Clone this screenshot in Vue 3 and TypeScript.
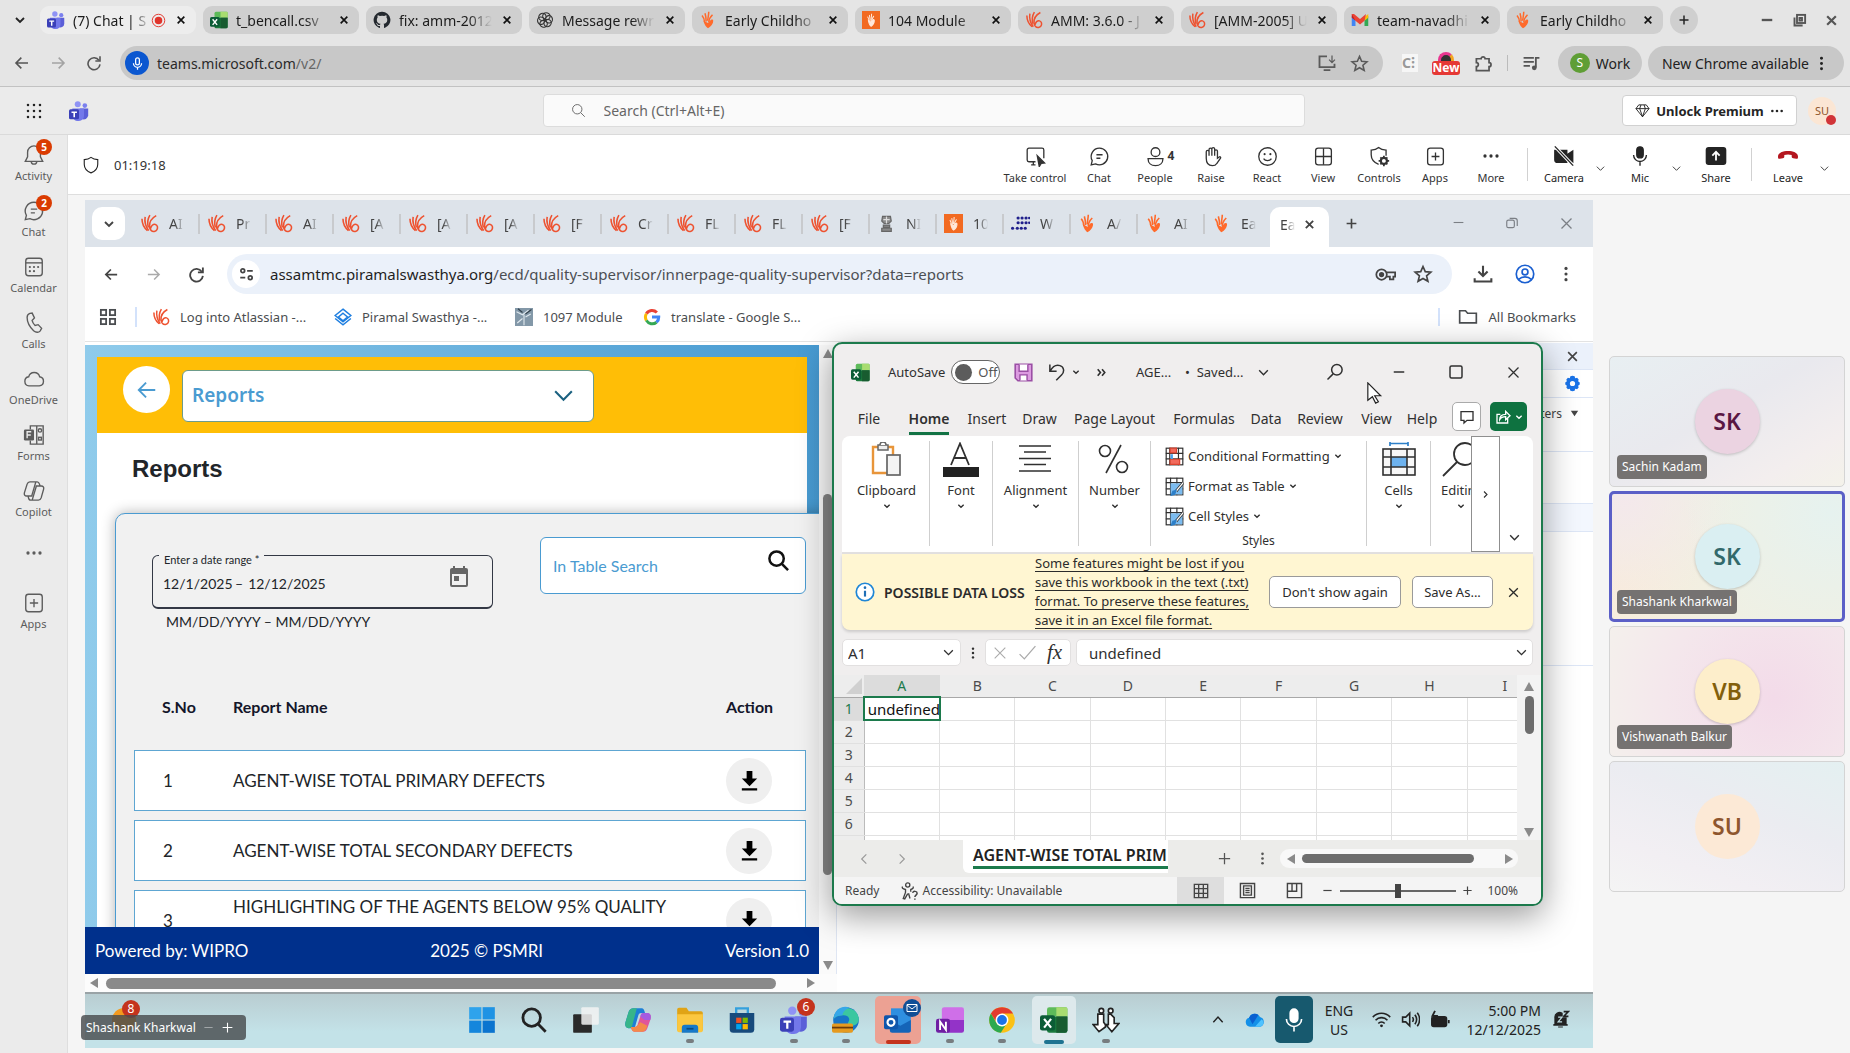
<script setup lang="ts">
import { h, ref } from 'vue'

const hand = '<g stroke="#ee5230" stroke-width="2" fill="none"><path d="M2.500 6c0 6 2 11 7 15"/><path d="M6.500 3.500c-1 6 .5 12 4.500 17.500"/><path d="M12.500 1.500c-3 5-3.500 10-2 15.500"/><path d="M20.500 2c-5.500 3-9 8-8.500 14 .3 4 3 6.500 6 6 3.200-.5 4.600-3.400 4-6-.8-3-4-4-6.500-1.800-1.300 1.200-1.800 2.600-2.200 4.300"/></g>'
const hand2 = '<g stroke="#ff6a2b" stroke-width="2" fill="none"><path d="M4 6c2 2 3 5 3.500 9"/><path d="M8 3c1 3 1.500 7 1.500 11"/><path d="M13 1c0 4-1 8-1.500 12"/><path d="M18 5c-3 3-5 6-5 10"/></g><path d="M6 13c1 5 4 9 6 10 4-2 7-6 7-10 0-2-3-2-4-.5L12 16z" fill="#ff6a2b" stroke="none"/>'
const teamsSvg = '<g stroke="none"><circle cx="10.500" cy="4" r="3.600" fill="#8f93f5"/><circle cx="19" cy="5.500" r="2.800" fill="#7b80ee"/><path d="M13 9h10v8a5 5 0 0 1-8 4z" fill="#5b5fd8"/><path d="M4 9h14v9a6 6 0 0 1-6 6 7 7 0 0 1-8-6z" fill="#7378ea"/><rect x="0" y="10" width="12" height="12" rx="2" fill="#3b40b8"/><path d="M3 12.500h6.500v1.800H7.200V19.500H5.300v-5.200H3z" fill="#fff"/></g>'
const excelSvg = '<g stroke="none"><path d="M8 1h14a1.500 1.500 0 0 1 1.500 1.500V9H6V3a2 2 0 0 1 2-2z" fill="#5dbb5a"/><path d="M14 1h8a1.500 1.500 0 0 1 1.500 1.500V9H14z" fill="#a8dc70"/><path d="M6 9h17.500v12a2 2 0 0 1-2 2H8a2 2 0 0 1-2-2z" fill="#1b7a3c"/><path d="M14 9h9.500v12a2 2 0 0 1-2 2H14z" fill="#185c30"/><rect x="0" y="8" width="13" height="13" rx="2" fill="#0b5c36"/><path d="M3.500 11l6 7.500M9.500 11l-6 7.500" stroke="#fff" stroke-width="1.900"/></g>'
const icons: Record<string, string> = {
  hand, hand2, teams: teamsSvg, excel: excelSvg,
  handBox: '<rect width="24" height="24" fill="#f26a21" stroke="none"/><g transform="translate(5 3) scale(.6 .75)" stroke="#ffe9dc" stroke-width="2.200"><path d="M4 6c2 2 3 5 3.500 9"/><path d="M8 3c1 3 1.500 7 1.500 11"/><path d="M13 1c0 4-1 8-1.500 12"/><path d="M18 5c-3 3-5 6-5 10"/><path d="M6 13c1 5 4 9 6 10 4-2 7-6 7-10 0-2-3-2-4-.5L12 16z" fill="#ffe9dc"/></g>',
  down: '<path d="M6 9l6 6 6-6" stroke-width="2.800"/>',
  chev: '<path d="M4 8l8 8 8-8"/>',
  up: '<path d="M4 16l8-9 8 9"/>',
  left: '<path d="M16 4l-8 8 8 8"/>',
  right: '<path d="M8 4l8 8-8 8"/>',
  dright: '<path d="M5 6l5 6-5 6M13 6l5 6-5 6"/>',
  x: '<path d="M4 4l16 16M20 4L4 20"/>',
  plus: '<path d="M12 3v18M3 12h18"/>',
  minus: '<path d="M3 12h18"/>',
  back: '<path d="M21 12H4M11 4l-8 8 8 8"/>',
  fwd: '<path d="M3 12h17M13 4l8 8-8 8"/>',
  reload: '<path d="M19.500 8A9 9 0 1 0 21 14"/><path d="M21 2v7h-7"/>',
  mic: '<rect x="8.500" y="2" width="7" height="12" rx="3.500" fill="currentColor"/><path d="M5 11a7 7 0 0 0 14 0M12 18v4.500"/>',
  micLine: '<rect x="9" y="3" width="6" height="11" rx="3"/><path d="M5.500 11.500a6.500 6.500 0 0 0 13 0M12 18v4"/>',
  record: '<circle cx="12" cy="12" r="10" stroke="#e0342b"/><circle cx="12" cy="12" r="6" fill="#e0342b" stroke="none"/>',
  github: '<path fill="#24292f" stroke="none" d="M12 1A11 11 0 0 0 8.500 22.500c.6.100.8-.2.800-.5v-2c-3 .7-3.700-1.300-3.700-1.300-.5-1.200-1.200-1.600-1.200-1.600-1-.7.100-.7.100-.7 1.100.1 1.700 1.200 1.700 1.200 1 1.700 2.600 1.200 3.200.9.100-.7.400-1.200.7-1.500-2.400-.3-5-1.200-5-5.400 0-1.200.4-2.200 1.100-3-.1-.3-.5-1.400.1-2.900 0 0 .9-.3 3 1.100a10 10 0 0 1 5.500 0c2.100-1.400 3-1.100 3-1.100.6 1.500.2 2.600.1 2.900.7.800 1.100 1.800 1.100 3 0 4.200-2.600 5.100-5 5.400.4.300.7 1 .7 2v3c0 .3.200.6.800.5A11 11 0 0 0 12 1z"/>',
  gpt: '<g stroke="#333" stroke-width="1.500"><ellipse cx="12" cy="6.500" rx="5" ry="4.500" transform="rotate(20 12 12)"/><ellipse cx="12" cy="6.500" rx="5" ry="4.500" transform="rotate(80 12 12)"/><ellipse cx="12" cy="6.500" rx="5" ry="4.500" transform="rotate(140 12 12)"/><ellipse cx="12" cy="6.500" rx="5" ry="4.500" transform="rotate(200 12 12)"/><ellipse cx="12" cy="6.500" rx="5" ry="4.500" transform="rotate(260 12 12)"/><ellipse cx="12" cy="6.500" rx="5" ry="4.500" transform="rotate(320 12 12)"/></g>',
  gmail: '<g stroke="none"><path d="M1 7v13h5V10z" fill="#4285f4"/><path d="M23 7v13h-5V10z" fill="#34a853"/><path d="M1 4l5 4v5L1 9z" fill="#c5221f"/><path d="M23 4l-5 4v5l5-4z" fill="#fbbc04"/><path d="M1 4h3l8 6.500L20 4l-2 9-6 5-6-5z" fill="#ea4335"/></g>',
  install: '<path d="M12 4H3v13h18v-4M8 20.500h8" stroke-width="2.200"/><path d="M18 3v8M14.500 8l3.500 3.500L21.500 8"/>',
  star: '<path d="M12 3l2.700 6.200 6.700.6-5.100 4.400 1.600 6.600L12 17.300l-5.900 3.500 1.600-6.600-5.100-4.400 6.700-.6z"/>',
  puzzle: '<path d="M3 6h6a2.500 2.500 0 1 1 5 0h5v5a2.500 2.500 0 1 1 0 5v5H3v-5a2.500 2.500 0 1 0 0-5z" stroke-width="2.200"/>',
  playlist: '<path d="M2 5h13M2 10h13M2 15h8" stroke-width="2.300"/><circle cx="15.500" cy="17.500" r="3" fill="currentColor" stroke="none"/><path d="M17.500 17V5H22" stroke-width="2.300"/>',
  dots: '<g fill="currentColor" stroke="none"><circle cx="12" cy="4.500" r="2.100"/><circle cx="12" cy="12" r="2.100"/><circle cx="12" cy="19.500" r="2.100"/></g>',
  hdots: '<g fill="currentColor" stroke="none"><circle cx="4" cy="12" r="2.200"/><circle cx="12" cy="12" r="2.200"/><circle cx="20" cy="12" r="2.200"/></g>',
  restore: '<rect x="8" y="3" width="13" height="13"/><path d="M4 7v13h13M12 8h4v4h-4z"/>',
  restore2: '<rect x="3" y="7" width="13" height="13" rx="3"/><path d="M8 4h9a4 4 0 0 1 4 4v9"/>',
  square: '<rect x="4" y="4" width="16" height="16" rx="2"/>',
  waffle: '<g fill="#222" stroke="none"><circle cx="4" cy="4" r="1.700"/><circle cx="12" cy="4" r="1.700"/><circle cx="20" cy="4" r="1.700"/><circle cx="4" cy="12" r="1.700"/><circle cx="12" cy="12" r="1.700"/><circle cx="20" cy="12" r="1.700"/><circle cx="4" cy="20" r="1.700"/><circle cx="12" cy="20" r="1.700"/><circle cx="20" cy="20" r="1.700"/></g>',
  search: '<circle cx="10" cy="10" r="7.500"/><path d="M15.500 15.500L22 22"/>',
  searchR: '<circle cx="14.500" cy="9" r="7"/><path d="M9.500 14.500L2 22"/>',
  gem: '<path d="M6 3h12l4.500 6L12 22 1.500 9zM1.500 9h21M12 22L7.500 9l2-6M12 22l4.500-13-2-6"/>',
  shield: '<path d="M12 1.800c3 2.200 6 2.800 9 3V11c0 6-4 9.500-9 11.500C7 20.500 3 17 3 11V4.800c3-.2 6-.8 9-3z"/>',
  bell: '<path d="M12 2a7 7 0 0 0-7 7v5l-2.500 5h19L19 14V9a7 7 0 0 0-7-7zM9 19a3 3 0 0 0 6 0"/>',
  chat: '<path d="M12 2.500a9.500 9.500 0 1 1-4.500 17.900L2.500 21.500l1.200-4.800A9.500 9.500 0 0 1 12 2.500zM8.500 10h7M8.500 14h4.500"/>',
  calendar: '<rect x="3" y="2.500" width="18" height="19" rx="3"/><path d="M3 7.500h18"/><g fill="currentColor" stroke="none"><circle cx="7.500" cy="12" r="1.200"/><circle cx="12" cy="12" r="1.200"/><circle cx="16.500" cy="12" r="1.200"/><circle cx="7.500" cy="16.500" r="1.200"/><circle cx="12" cy="16.500" r="1.200"/></g>',
  phone: '<path d="M7.500 1.500l2.500-.3 2.500 5.300-2.600 2.700c.5 2.300 1.600 4 3.300 5.500l3.300-.9 3.800 4-1.700 3c-1.500 1.800-4.500 1.800-7-.4C7.500 16.500 4.500 11.500 4.500 6c0-2.500 1.300-4 3-4.500z"/>',
  cloud: '<path d="M6.500 19.500a5 5 0 0 1-.3-9.900 6.200 6.200 0 0 1 12 0 5 5 0 0 1-.4 9.900z"/>',
  forms: '<path d="M8 6V2h14v20H8v-4M15 2v20"/><circle cx="18.500" cy="7" r="1.800"/><rect x="17" y="14.500" width="3" height="3"/><rect x="1" y="6" width="11" height="12" rx="1.500" fill="currentColor" stroke="none"/><path d="M4.500 15.500v-7H9M4.500 12h4" stroke="#ebebeb"/>',
  copilot: '<path d="M9 2h6.500c1.500 0 2 1 2.500 2.500l.6 2h1.400c2 0 3 1.700 2.500 3.500l-2.700 9.500c-.5 1.500-1.500 2.500-3 2.500H8.500C7 22 6.300 21 6 19.500l-.5-2H4c-2 0-3-1.700-2.500-3.500L4.500 4.500C5 3 6 2 7.500 2zM14 2l-4.500 15.500H5.500M18.600 6.500h-4L10 22"/>',
  apps: '<rect x="3" y="2.500" width="18" height="19" rx="3"/><path d="M12 7.500v9M7.500 12h9"/>',
  take: '<path d="M12 18H4.500A2 2 0 0 1 2.500 16V4.500a2 2 0 0 1 2-2h15a2 2 0 0 1 2 2V14M7 21.500h5M9.500 18v3.500"/><path d="M14 11l8.500 8.500-4 .3-2.200 3.700z" fill="currentColor"/>',
  people: '<circle cx="12" cy="7" r="5"/><path d="M3.500 14.500h17c0 5-3.500 8-8.500 8s-8.500-3-8.500-8z"/>',
  raise: '<path d="M6 14V6.500a1.600 1.600 0 0 1 3.200 0V4a1.600 1.600 0 0 1 3.200 0v-.5a1.600 1.600 0 0 1 3.200 0V6a1.600 1.600 0 0 1 3.200 0v8l2-1.500c1-.7 2.200.2 1.500 1.500L18 20c-1 1.700-2.500 2.500-5 2.500-4.500 0-7-3-7-8.500zM9.200 6v5M12.400 4v7M15.600 5v6"/>',
  smile: '<circle cx="12" cy="12" r="10"/><path d="M7.500 14.500c2 3 7 3 9 0"/><circle cx="8.700" cy="9.300" r="1.200" fill="currentColor" stroke="none"/><circle cx="15.300" cy="9.300" r="1.200" fill="currentColor" stroke="none"/>',
  view: '<rect x="3" y="2.500" width="18" height="19" rx="3"/><path d="M12 2.500v19M3 12h18"/>',
  controls: '<path d="M11 21C6 19 2.500 15.500 2.500 10V4.800c3-.2 6-.8 8.500-3 2.500 2.200 5.500 2.800 8.500 3V11"/><circle cx="17" cy="17" r="3.500" stroke-width="2.500"/><path d="M17 11v3M17 20v3M11 17h3M20 17h3M13 13l2 2M21 13l-2 2M13 21l2-2M21 21l-2-2" stroke-width="2"/>',
  camera: '<path d="M2 6h13v13H5a3 3 0 0 1-3-3zM16.500 10l5-3.500v12l-5-3.500z" fill="currentColor"/><path d="M2 1.500l20 21" stroke="#fff" stroke-width="3.500"/><path d="M2 1.500l20 21"/>',
  share: '<rect x="1.500" y="3" width="21" height="18" rx="2.500" fill="currentColor"/><path d="M12 17V8M8 11.500L12 7.500l4 4" stroke="#fff" stroke-width="2"/>',
  leave: '<path d="M12 7c5 0 10 1.800 10 5.500 0 1.500-.2 2.600-1.800 2.300l-3-.6c-1-.2-1.500-.8-1.500-1.800V11c-2.300-.8-5-.8-7.400 0v1.400c0 1-.5 1.600-1.500 1.800l-3 .6C2.200 15.100 2 14 2 12.500 2 8.800 7 7 12 7z" fill="#b4161f" stroke="none"/>',
  emblem: '<path d="M7 3h10l1 6-3 3H9L6 9zM8 14h8v3H8zM6 18h12v4H6z" fill="#8a8a8a" stroke="#666"/><path d="M12 3v9M8 7h8" stroke="#ddd"/>',
  wdots: '<g fill="#20208c" stroke="none"><circle cx="9" cy="5" r="2"/><circle cx="14" cy="5" r="2"/><circle cx="19" cy="5" r="2"/><circle cx="23" cy="5" r="1.500"/><circle cx="9" cy="11" r="2"/><circle cx="14" cy="11" r="2"/><circle cx="19" cy="11" r="2"/><circle cx="23" cy="11" r="1.500"/><circle cx="2" cy="18" r="2"/><circle cx="8" cy="18" r="2"/><circle cx="13" cy="18" r="2"/><circle cx="18" cy="18" r="2"/></g>',
  tune: '<circle cx="6" cy="6" r="3"/><path d="M13 6h9M2 17h8"/><circle cx="18" cy="17" r="3"/>',
  key: '<circle cx="7.500" cy="12" r="6"/><circle cx="7.500" cy="12" r="2" fill="currentColor"/><path d="M13 9.500h10v5h-2v3h-4v-3h-4"/>',
  dl: '<path d="M12 2v12M6.500 9l5.500 5.500L17.500 9M2 17v4h20v-4" stroke-width="2.500"/>',
  profile: '<circle cx="12" cy="12" r="10.500"/><circle cx="12" cy="9.500" r="3.500"/><path d="M4.500 18.500c4-4 11-4 15 0"/>',
  grid4: '<rect x="2.500" y="2.500" width="7" height="7"/><rect x="14.500" y="2.500" width="7" height="7"/><rect x="2.500" y="14.500" width="7" height="7"/><rect x="14.500" y="14.500" width="7" height="7"/>',
  diamond: '<g stroke="#1f7fe0" stroke-width="2"><path d="M12 1.500L22.500 10 12 18.500 1.500 10z"/><path d="M12 7l6 5-6 5-6-5z"/><path d="M1.500 14L12 22.500 22.500 14"/></g>',
  mod: '<rect width="24" height="24" fill="#8398a8" stroke="none"/><path d="M2 5l8 4 8-6M12 9v14M3 20l7-6M21 8l-7 4" stroke="#dfe8ee"/><path d="M4 1l6 5M22 2l-8 6" stroke="#33424d"/>',
  google: '<g stroke-width="4"><path d="M18.500 6A9 9 0 0 0 4.500 7.500" stroke="#ea4335"/><path d="M4.500 7.500a9 9 0 0 0 0 9" stroke="#fbbc05"/><path d="M4.500 16.500A9 9 0 0 0 18 19" stroke="#34a853"/><path d="M18 19a9 9 0 0 0 3-7h-9" stroke="#4285f4"/></g>',
  folder: '<path d="M2 19V4.500h7l2.500 3H22V19z"/>',
  cal2: '<path d="M5 3h14a2 2 0 0 1 2 2v15a2 2 0 0 1-2 2H5a2 2 0 0 1-2-2V5c0-1.100.9-2 2-2zM5 9v11h14V9z" fill="currentColor" fill-rule="evenodd" stroke="none"/><path d="M7 1v3M17 1v3"/><rect x="7" y="11" width="5" height="5" fill="currentColor" stroke="none"/>',
  dlsolid: '<path d="M9 2h6v8h5l-8 8-8-8h5zM4 20h16v2.500H4z" fill="#000" stroke="none"/>',
  gear: '<path d="M12 1l3 .8.8 2.700 2.700-.6 2.200 2.300-.8 2.700 2.300 1.600v3l-2.300 1.600.8 2.700-2.200 2.300-2.700-.6-.8 2.700-3 .8-3-.8-.8-2.700-2.700.6-2.200-2.300.8-2.700L1.800 13.500v-3l2.300-1.600-.8-2.700 2.200-2.300 2.700.6L9 1.800zM12 8.300a3.700 3.700 0 1 0 0 7.400 3.700 3.700 0 0 0 0-7.400z" fill="#1a73e8" fill-rule="evenodd" stroke="none"/>',
  save: '<path d="M1.500 1.500h21v21H5l-3.500-3.500z" fill="#dc9be0" stroke="#9b4fa5" stroke-width="2"/><path d="M6.500 2v8.500h11V2M7.500 22v-7h9v7" fill="#fff" stroke="#9b4fa5" stroke-width="1.800"/>',
  undo: '<path d="M2.500 2v9h9M3 10.500C6 5 11 2 16 3.500c6 2 6 8.500 2 12.500l-7 7"/>',
  comment: '<path d="M3 4h18v13h-9l-4.500 4v-4H3z"/>',
  share2: '<path d="M8 8H3v13h16v-7M7 16c0-5 3-8 9-8V3.500l6.500 6.500-6.500 6v-4.500c-4 0-7 1-9 4.500z"/>',
  clip: '<path d="M4 5h20v26H4z" fill="#fff" stroke="#e8953a" stroke-width="2.400"/><path d="M9 3h10v5H9z" fill="#eee" stroke="#666" stroke-width="1.500"/><path d="M11 3a3 3 0 0 1 6 0" fill="#fff" stroke="#666" stroke-width="1.500"/><rect x="18" y="13" width="13" height="20" fill="#f4f4f4" stroke="#666" stroke-width="1.700"/>',
  fontA: '<path d="M8 23L17 1.500 26 23M11 16h12" stroke-width="1.800"/><rect x="0" y="25" width="36" height="10" fill="#222" stroke="none"/>',
  align: '<path d="M1 4h32M6 10h22M1 16.500h32M6 22.500h22M1 29h32" stroke-width="1.700"/>',
  percent: '<circle cx="8" cy="9" r="5.500"/><circle cx="25" cy="25" r="5.500"/><path d="M24 3L9 31"/>',
  cells: '<path d="M9 1.500h18M9 0v4M27 0v4" stroke="#2d7fc8" stroke-width="1.700"/><rect x="2" y="7" width="32" height="26" fill="#f7f7f7"/><rect x="10" y="15" width="16" height="10" fill="#6db2ee" stroke="none"/><path d="M10 7v26M26 7v26M2 15h32M2 25h32"/>',
  mag: '<circle cx="24" cy="12" r="11" stroke-width="1.800"/><path d="M16 20L2 34" stroke-width="1.800"/>',
  cond: '<rect x="1.500" y="1.500" width="21" height="21" fill="#fff"/><path d="M6 1v22M17 1v22M1 8h22M1 15h22"/><path d="M6.500 1.500h8v6h-8zM6.500 15.500h12v6.500h-12z" fill="#f26a5c" stroke="#d8432f"/><path d="M7 9h3v6H7z" fill="#4ba0e8" stroke="none"/>',
  ftab: '<rect x="1.500" y="1.500" width="21" height="21" fill="#fff"/><path d="M1 7h22M1 15h22M7 1v22M15 1v22"/><rect x="7" y="8" width="15" height="14" fill="#7cbcf0" stroke="none"/><path d="M23 7L14 18" stroke="#333" stroke-width="3.500"/><path d="M23 7L14 18" stroke="#fff" stroke-width="1.500"/><path d="M14 17l-2 5-4 1 2-5z" fill="#2d7fc8" stroke="#2d7fc8"/>',
  info: '<circle cx="12" cy="12" r="10.500" stroke="#1f86d6" fill="#fff"/><path d="M12 10.500v7" stroke="#1f6fb6" stroke-width="2.600"/><circle cx="12" cy="6.800" r="1.600" fill="#1f6fb6" stroke="none"/>',
  check: '<path d="M2 14l6 6L22 4"/>',
  access: '<circle cx="9" cy="4" r="2.800"/><path d="M2 6c-1 2 0 3 4 4v4l-3 8 2 .5 4-7M16 6c1 2 0 3-3 4v3M10 15l2 7"/><path d="M15.500 14.500c1-3 6-2.500 6 .5 0 2.500-3 2.500-3 5M18.500 22v1.500" stroke-width="2"/>',
  table: '<path d="M2 2h20v20H2zM2 8.500h20M2 15.500h20M8.500 2v20M15.500 2v20"/>',
  page: '<path d="M2 2h20v20H2z"/><path d="M6.500 5.500h11v13h-11zM9 9h6M9 12h6M9 15h6"/>',
  brk: '<path d="M2 2h20v20H2zM2 13h13V2M8.500 2v11"/>',
  win: '<g stroke="none"><path d="M1 1h10.500v10.500H1z" fill="#2ea3ec"/><path d="M12.500 1H23v10.500H12.500z" fill="#1f93e4"/><path d="M1 12.500h10.500V23H1z" fill="#1486dc"/><path d="M12.500 12.500H23V23H12.500z" fill="#0b74cf"/></g>',
  task: '<g stroke="none"><rect x="1" y="7" width="16" height="16" rx="1" fill="#2a2a2a"/><rect x="8" y="1" width="15" height="15" rx="1" fill="#f3f3f3" opacity=".85"/></g>',
  copCol: '<g stroke="none"><path d="M8 2h7c2 0 2.500 2 3 4h-3c-2 0-2.500 1-3 3l-2 7c-.5 2-1 3-3 3H4C1 19 .5 16 1.500 13L4 5c.7-2 2-3 4-3z" fill="#1d7fd6"/><path d="M4 5c.7-2 2-3 4-3h3L7 17c-.5 1.500-1 2-3 2-3 0-3.500-3-2.500-6z" fill="#37b58a"/><path d="M16 22H9c-2 0-2.500-2-3-4h3c2 0 2.500-1 3-3l2-6c.5-2 1-3 3-3h3c3 0 3.500 3 2.500 6L20 19c-.7 2-2 3-4 3z" fill="#e0559a"/><path d="M16 22H9c-2 0-2.500-2-3-4h3c3 0 4-4 5-4l6 3c-.8 3-2 5-4 5z" fill="#f48a4a"/><path d="M14 9c.5-2 1-3 3-3h3c3 0 3.500 3 2.500 6l-5 0z" fill="#a55be0"/></g>',
  explorer: '<g stroke="none"><path d="M1 3a1.500 1.500 0 0 1 1.500-1.500H9l2 3h10.500A1.500 1.500 0 0 1 23 6v15H1z" fill="#e0a316"/><path d="M1 7h22v14a1.500 1.500 0 0 1-1.500 1.500h-19A1.500 1.500 0 0 1 1 21z" fill="#fbc740"/><path d="M5 23v-4.500A2.500 2.500 0 0 1 7.500 16h9a2.500 2.500 0 0 1 2.500 2.500V23z" fill="#1779c9"/><path d="M9 19.500h6" stroke="#0b4a80" stroke-width="1.500"/></g>',
  store: '<g stroke="none"><path d="M1.500 6h21v14a3 3 0 0 1-3 3h-15a3 3 0 0 1-3-3z" fill="#174a7c"/><path d="M7 6V2h10v4" stroke="#34a0dd" stroke-width="2"/><path d="M7 10h4.500v4.500H7z" fill="#f25022"/><path d="M12.500 10H17v4.500h-4.500z" fill="#7fba00"/><path d="M7 15.500h4.500V20H7z" fill="#00a4ef"/><path d="M12.500 15.500H17V20h-4.500z" fill="#ffb900"/></g>',
  edge: '<g stroke="none"><circle cx="12" cy="12" r="11" fill="#1775c8"/><path d="M1.500 11C2-1 22-2 23 11c0 4-3 6-6 6s-4-1-3-3c2-3 0-6-4-6-4 0-7 1-8.500 3z" fill="#3bc7a0"/><path d="M1.500 11C2 2 10-1 15 1.500 11 3 9 6 9 8c-4 0-6 1-7.500 3z" fill="#36a7e8"/><rect x="0" y="15" width="18" height="8" rx="1.500" fill="#e59a20"/><path d="M0 18.500h18" stroke="#6b3b0b" stroke-width="1.500"/></g>',
  outlook: '<g stroke="none"><path d="M6 2h17v20H6z" fill="#2f8fe0"/><path d="M5 12l9 5 9-5v9a2 2 0 0 1-2 2H7a2 2 0 0 1-2-2z" fill="#1564b8"/><rect x="0" y="8" width="12" height="12" rx="1.500" fill="#0f56ac"/><circle cx="6" cy="14" r="3" stroke="#fff" stroke-width="1.800"/></g>',
  onenote: '<g stroke="none"><path d="M7 1h15a2 2 0 0 1 2 2v9H5V3a2 2 0 0 1 2-2z" fill="#cf6fe8"/><path d="M5 12h19v9a2 2 0 0 1-2 2H7a2 2 0 0 1-2-2z" fill="#9333c8"/><rect x="0" y="11" width="12" height="12" rx="2" fill="#6f1fa3"/><path d="M3.500 20.500v-7l5 7v-7" stroke="#fff" stroke-width="1.600"/></g>',
  chrome: '<g stroke="none"><circle cx="12" cy="12" r="11" fill="#fbc116"/><path d="M12 1a11 11 0 0 1 9.500 5.500H12L8 15 2.500 6.500A11 11 0 0 1 12 1z" fill="#e33b2e"/><path d="M2.500 6.500l5 8.500 4.500 2 4-2-5 8A11 11 0 0 1 2.500 6.500z" fill="#2da94f"/><circle cx="12" cy="12" r="5.500" fill="#fff"/><circle cx="12" cy="12" r="4.200" fill="#1a73e8"/></g>',
  dual: '<g stroke="#222" stroke-width="1.400" fill="#fff"><circle cx="8" cy="4" r="2"/><circle cx="16" cy="4" r="2"/><path d="M5 7h5v7l1.500 2v2L6 22l-5-6h4zM14 7h2l3 3v5h4l-6 7-5-6h2z"/></g>',
  onedrive: '<g stroke="none"><path d="M6 20a5.500 5.500 0 0 1-1-10.800A7 7 0 0 1 18 8.500 6 6 0 0 1 18.500 20z" fill="#1490e8"/><path d="M12 20l8-9a5 5 0 0 1-1.500 9z" fill="#4fc3ff"/><path d="M5 9.200A7 7 0 0 1 16 6L9 17z" fill="#0a5fd0"/></g>',
  wifi: '<path d="M1 9c6-6.500 16-6.500 22 0M4.500 13c4-4.500 11-4.500 15 0M8 17c2-2.500 6-2.500 8 0"/><circle cx="12" cy="20" r="1.800" fill="currentColor" stroke="none"/>',
  sound: '<path d="M2 9h4l5-5v16l-5-5H2zM14.500 9c1.500 2 1.500 4 0 6M17.500 6c3 4 3 8 0 12M20.500 3.500c4 5 4 12 0 17"/>',
  battery: '<rect x="2" y="8" width="18" height="12" rx="2.500" fill="currentColor"/><path d="M22.500 12v4M6 1L3 7h5L5 12" stroke-width="2.200"/>',
  bellz: '<path d="M5 18V10a6 6 0 0 1 9-6v6h5v8l2 1H3zM9 21.500h6" fill="currentColor"/><path d="M16 2h6l-6 6h6" stroke-width="2"/><path d="M9 9h5l-5 6h5" stroke="#c3e0e6" stroke-width="1.500"/>',
  tab: '<path d="M4 6l8 12 8-12z" fill="currentColor" stroke="none"/>',
  envelope: '<path d="M2 5h20v14H2zM2 6l10 8 10-8"/>',
  cursor: '<path d="M2 1l14 14H9.500l4 6.500-3 1.500-3.500-7L2 20z" fill="#fff" stroke="#222" stroke-width="1.300"/>',
}
const Ico = (p: { n: string; s?: number; w?: number; b?: number }) =>
  h('svg', {
    width: p.s ?? 20, height: p.s ?? 20, viewBox: `0 0 ${p.b ?? 24} ${p.b ?? 24}`,
    fill: 'none', stroke: 'currentColor', 'stroke-width': p.w ?? 1.5,
    'aria-hidden': 'true', innerHTML: icons[p.n],
  })
Ico.props = ['n', 's', 'w', 'b']

const tabs = [
  { icon: 'teams', title: '(7) Chat | S', live: true },
  { icon: 'excel', title: 't_bencall.csv' },
  { icon: 'github', title: 'fix: amm-2012' },
  { icon: 'gpt', title: 'Message rewr' },
  { icon: 'hand2', title: 'Early Childho' },
  { icon: 'handBox', title: '104 Module' },
  { icon: 'hand', title: 'AMM: 3.6.0 - J' },
  { icon: 'hand', title: '[AMM-2005] U' },
  { icon: 'gmail', title: 'team-navadhi' },
  { icon: 'hand2', title: 'Early Childho' },
]
const rail = [
  { icon: 'bell', label: 'Activity', badge: 5 },
  { icon: 'chat', label: 'Chat', badge: 2 },
  { icon: 'calendar', label: 'Calendar' },
  { icon: 'phone', label: 'Calls' },
  { icon: 'cloud', label: 'OneDrive' },
  { icon: 'forms', label: 'Forms' },
  { icon: 'copilot', label: 'Copilot' },
  { icon: 'hdots', label: '' },
  { icon: 'apps', label: 'Apps' },
]
const actions = [
  { icon: 'take', label: 'Take control' }, { icon: 'chat', label: 'Chat' },
  { icon: 'people', label: 'People', count: 4 }, { icon: 'raise', label: 'Raise' },
  { icon: 'smile', label: 'React' }, { icon: 'view', label: 'View' },
  { icon: 'controls', label: 'Controls' }, { icon: 'apps', label: 'Apps' },
  { icon: 'hdots', label: 'More' },
]
const sharedTabs = [
  ['hand', 'AI'], ['hand', 'Pr'], ['hand', 'AI'], ['hand', '[A'], ['hand', '[A'], ['hand', '[A'],
  ['hand', '[F'], ['hand', 'Cr'], ['hand', 'FL'], ['hand', 'FL'], ['hand', '[F'], ['emblem', 'NI'],
  ['handBox', '10'], ['wdots', 'W'], ['hand2', 'A/'], ['hand2', 'AI'], ['hand2', 'Ea'],
]
const bookmarks = [
  { icon: 'hand', text: 'Log into Atlassian -...', w: 182 },
  { icon: 'diamond', text: 'Piramal Swasthya -...', w: 181 },
  { icon: 'mod', text: '1097 Module', w: 128 },
  { icon: 'google', text: 'translate - Google S...', w: 180 },
]
const reports = [
  'AGENT-WISE TOTAL PRIMARY DEFECTS',
  'AGENT-WISE TOTAL SECONDARY DEFECTS',
  'HIGHLIGHTING OF THE AGENTS BELOW 95% QUALITY SCORE',
]
const menus = [['File', 54], ['Home', 66], ['Insert', 50], ['Draw', 55], ['Page Layout', 95], ['Formulas', 84], ['Data', 40], ['Review', 68], ['View', 45], ['Help', 46]]
const groups = [
  { icon: 'clip', label: 'Clipboard', w: 86 },
  { icon: 'fontA', label: 'Font', w: 63 },
  { icon: 'align', label: 'Alignment', w: 86 },
  { icon: 'percent', label: 'Number', w: 72 },
]
const cols = ['A', 'B', 'C', 'D', 'E', 'F', 'G', 'H', 'I']
const rows = [1, 2, 3, 4, 5, 6, 7]
const people = [
  { ini: 'SK', name: 'Sachin Kadam', c: 'p1' },
  { ini: 'SK', name: 'Shashank Kharkwal', c: 'p2' },
  { ini: 'VB', name: 'Vishwanath Balkur', c: 'p3' },
  { ini: 'SU', name: '', c: 'p4' },
]
const dock = [
  { icon: 'win' }, { icon: 'search' }, { icon: 'task' }, { icon: 'copCol' }, { icon: 'explorer', run: true },
  { icon: 'store' }, { icon: 'teams', run: true, badge: 6 }, { icon: 'edge', run: true },
  { icon: 'outlook', run: true, cls: 'alert' }, { icon: 'onenote', run: true }, { icon: 'chrome', run: true },
  { icon: 'excel', run: true, cls: 'focus' }, { icon: 'dual', run: true },
]
const page = ref('Reports')
const query = ref('')
const zoom = ref(50)
const autosave = ref(false)
</script>

<template>
  <div class="screen">
    <header class="strip">
      <button class="tabmenu" aria-label="Search tabs"><Ico n="down" :s="16" /></button>
      <div v-for="(t, i) in tabs" :key="i" class="tab" :class="{ on: i === 0 }">
        <Ico :n="t.icon" :s="18" />
        <span class="ttl">{{ t.title }}</span>
        <Ico v-if="t.live" n="record" :s="15" />
        <button aria-label="Close tab"><Ico n="x" :s="10" :w="4" /></button>
      </div>
      <button class="newtab" aria-label="New tab"><Ico n="plus" :s="12" :w="3" /></button>
      <div class="winbtns">
        <button aria-label="Minimize"><Ico n="minus" :s="14" :w="4" /></button>
        <button aria-label="Restore"><Ico n="restore" :s="15" :w="3" /></button>
        <button aria-label="Close"><Ico n="x" :s="13" :w="4" /></button>
      </div>
    </header>

    <div class="urlrow">
      <div class="nav3">
        <button aria-label="Back"><Ico n="back" :s="16" :w="2.4" /></button>
        <button aria-label="Forward" class="dim"><Ico n="fwd" :s="16" :w="2.4" /></button>
        <button aria-label="Reload"><Ico n="reload" :s="16" :w="2.4" /></button>
      </div>
      <div class="omni">
        <span class="micdot"><Ico n="micLine" :s="15" :w="2" /></span>
        <span class="url">teams.microsoft.com<i>/v2/</i></span>
        <Ico n="install" :s="20" /><Ico n="star" :s="19" :w="2" />
      </div>
      <div class="exts">
        <span class="ext-c">C⁝</span>
        <span class="ext-new"><i></i><b>New</b></span>
        <Ico n="puzzle" :s="19" />
        <span class="vsep"></span>
        <Ico n="playlist" :s="19" />
      </div>
      <button class="pill work"><b>S</b>Work</button>
      <button class="pill upd">New Chrome available<Ico n="dots" :s="17" /></button>
    </div>

    <div class="thead">
      <div class="tleft"><Ico n="waffle" :s="18" /><Ico n="teams" :s="20" /></div>
      <label class="tsearch"><Ico n="search" :s="15" /><input type="search" placeholder="Search (Ctrl+Alt+E)" aria-label="Search" /></label>
      <div class="tright">
        <button class="premium"><Ico n="gem" :s="15" />Unlock Premium<Ico n="hdots" :s="14" :w="2" /></button>
        <span class="me">SU<i></i></span>
      </div>
    </div>

    <div class="body">
      <nav class="rail">
        <a v-for="(r, i) in rail" :key="i" href="#" :class="{ slim: !r.label }">
          <Ico :n="r.icon" :s="r.label ? 22 : 18" />
          <span>{{ r.label }}</span>
          <em v-if="r.badge">{{ r.badge }}</em>
        </a>
      </nav>

      <main class="meeting">
        <div class="mbar">
          <Ico n="shield" :s="18" />
          <span class="timer">01:19:18</span>
          <div class="acts">
            <button v-for="(a, i) in actions" :key="a.label" class="act" :class="{ wide: i === 0 }">
              <span class="ic"><Ico :n="a.icon" :s="a.icon === 'hdots' ? 18 : 21" /><b v-if="a.count">{{ a.count }}</b></span>{{ a.label }}
            </button>
            <span class="asep"></span>
            <button class="act dev"><span class="ic"><Ico n="camera" :s="22" /></span>Camera</button>
            <button class="caret" aria-label="Camera options"><Ico n="chev" :s="11" :w="2" /></button>
            <button class="act dev"><span class="ic"><Ico n="mic" :s="22" /></span>Mic</button>
            <button class="caret" aria-label="Mic options"><Ico n="chev" :s="11" :w="2" /></button>
            <button class="act dev"><span class="ic"><Ico n="share" :s="22" /></span>Share</button>
            <span class="asep"></span>
            <button class="act dev"><span class="ic"><Ico n="leave" :s="24" /></span>Leave</button>
            <button class="caret last" aria-label="Leave options"><Ico n="chev" :s="11" :w="2" /></button>
          </div>
        </div>

        <div class="stage">
          <section class="shared">
            <div class="ctabs">
              <button class="cmenu" aria-label="Search tabs"><Ico n="down" :s="16" /></button>
              <div v-for="(t, i) in sharedTabs" :key="i" class="ctab"><Ico :n="t[0]" :s="19" /><span>{{ t[1] }}</span></div>
              <div class="ctab cur"><span>Ea</span><Ico n="x" :s="11" :w="4" /></div>
              <Ico n="plus" :s="13" :w="3" class="cplus" />
              <div class="cwin"><Ico n="minus" :s="13" :w="2" /><Ico n="restore2" :s="14" :w="2" /><Ico n="x" :s="15" :w="2" /></div>
            </div>
            <div class="cbar">
              <div class="cnav"><Ico n="back" :s="15" :w="2.8" /><Ico n="fwd" :s="15" :w="2.4" class="dim" /><Ico n="reload" :s="17" :w="2.6" /></div>
              <div class="comni">
                <span class="site"><Ico n="tune" :s="15" :w="2.8" /></span>
                <span class="curl"><b>assamtmc.piramalswasthya.org</b>/ecd/quality-supervisor/innerpage-quality-supervisor?data=reports</span>
                <Ico n="key" :s="21" :w="2" /><Ico n="star" :s="20" :w="2" />
              </div>
              <div class="cright"><Ico n="dl" :s="20" /><Ico n="profile" :s="20" :w="2" class="blue" /><Ico n="dots" :s="18" /></div>
            </div>
            <div class="cmarks">
              <Ico n="grid4" :s="18" :w="2.4" />
              <span class="msep"></span>
              <a v-for="b in bookmarks" :key="b.text" href="#" :style="{ width: b.w + 'px' }"><Ico :n="b.icon" :s="18" />{{ b.text }}</a>
              <a href="#" class="allb"><Ico n="folder" :s="20" :w="2" />All Bookmarks</a>
            </div>

            <div class="cview">
              <div class="left">
                <div class="site-row">
                  <div class="app">
                    <div class="paper">
                      <div class="yellow">
                        <button class="goback" aria-label="Back"><Ico n="back" :s="22" :w="2" /></button>
                        <div class="pick">
                          <select v-model="page" aria-label="Page"><option>Reports</option></select>
                          <Ico n="chev" :s="25" :w="2" />
                        </div>
                      </div>
                      <h1>Reports</h1>
                    </div>
                    <div class="card">
                      <div class="filters">
                        <div class="datewrap">
                          <div class="date">
                            <label for="from">Enter a date range *</label>
                            <input id="from" class="d1" value="12/1/2025" /><span>–</span><input class="d2" value="12/12/2025" aria-label="End date" />
                            <Ico n="cal2" :s="24" :w="2" />
                          </div>
                          <p>MM/DD/YYYY – MM/DD/YYYY</p>
                        </div>
                        <div class="tsearch2"><input v-model="query" placeholder="In Table Search" aria-label="In Table Search" /><Ico n="search" :s="23" :w="2.6" /></div>
                      </div>
                      <table class="rep">
                        <thead><tr><th class="c1">S.No</th><th>Report Name</th><th class="c3">Action</th></tr></thead>
                        <tbody>
                          <tr v-for="(r, i) in reports" :key="r">
                            <td class="c1">{{ i + 1 }}</td><td class="c2">{{ r }}</td>
                            <td class="c3"><button :aria-label="'Download report ' + (i + 1)"><Ico n="dlsolid" :s="23" /></button></td>
                          </tr>
                        </tbody>
                      </table>
                    </div>
                    <footer><span>Powered by: WIPRO</span><span>2025 © PSMRI</span><span>Version 1.0</span></footer>
                  </div>
                  <div class="vbar"><i class="arrow up"></i><i class="th"></i><i class="arrow dn"></i></div>
                </div>
                <div class="hbar"><i class="arrow lt"></i><i class="th"></i><i class="arrow rt"></i></div>
              </div>
              <aside class="devtools">
                <div class="row r1"><Ico n="dots" :s="14" /><Ico n="x" :s="13" :w="3" /></div>
                <div class="row r2"><Ico n="gear" :s="17" /></div>
                <div class="row r3">filters<Ico n="tab" :s="11" /></div>
                <div class="row r4"></div>
                <div class="row r5"></div>
                <div class="row r6"></div>
              </aside>
            </div>

            <div class="dock">
              <span class="weather"><em>8</em></span>
              <div class="apps">
                <span v-for="(d, i) in dock" :key="i" class="dk" :class="d.cls">
                  <Ico :n="d.icon" :s="28" :w="2.4" /><em v-if="d.badge">{{ d.badge }}</em>
                  <em v-if="d.cls === 'alert'" class="mail"><Ico n="envelope" :s="12" :w="2" /></em>
                  <i v-if="d.run"></i>
                </span>
              </div>
              <div class="tray">
                <Ico n="up" :s="14" :w="2.4" />
                <Ico n="onedrive" :s="20" class="t2" />
                <span class="tmic"><Ico n="mic" :s="26" /></span>
                <span class="lang">ENG<br />US</span>
                <Ico n="wifi" :s="19" :w="2" /><Ico n="sound" :s="19" :w="2" /><Ico n="battery" :s="20" />
                <span class="clock">5:00 PM<br />12/12/2025</span>
                <Ico n="bellz" :s="19" />
              </div>
            </div>

            <div class="excel">
              <div class="xtitle">
                <Ico n="excel" :s="19" />
                <label class="auto">AutoSave<input v-model="autosave" type="checkbox" /><span class="sw"><i></i>Off</span></label>
                <Ico n="save" :s="19" class="xs" /><Ico n="undo" :s="18" :w="2" class="xu" /><Ico n="chev" :s="8" :w="4" class="xc" />
                <Ico n="dright" :s="13" :w="3" class="xd" />
                <span class="fname">AGE...</span><span class="saved">• &nbsp;Saved...</span><Ico n="chev" :s="13" :w="2.6" class="xv" />
                <div class="xright">
                  <Ico n="searchR" :s="18" :w="2" class="xq" />
                  <button aria-label="Minimize"><Ico n="minus" :s="14" :w="2.4" /></button>
                  <button aria-label="Maximize"><Ico n="square" :s="18" :w="2" /></button>
                  <button aria-label="Close"><Ico n="x" :s="15" :w="2" /></button>
                </div>
              </div>
              <div class="xmenu">
                <button v-for="m in menus" :key="m[0]" :class="{ on: m[0] === 'Home' }" :style="{ width: m[1] + 'px' }"><span>{{ m[0] }}</span></button>
                <div class="xm2">
                  <button class="cm" aria-label="Comments"><Ico n="comment" :s="16" :w="2" /></button>
                  <button class="sh" aria-label="Share"><Ico n="share2" :s="16" :w="2" /><Ico n="chev" :s="8" :w="4" /></button>
                </div>
              </div>
              <div class="ribbon">
                <button v-for="g in groups" :key="g.label" class="grp" :style="{ width: g.w + 'px' }">
                  <Ico :n="g.icon" :s="36" :b="36" :w="1.6" />{{ g.label }}<Ico n="chev" :s="8" :w="4" />
                </button>
                <div class="styles">
                  <button><Ico n="cond" :s="19" />Conditional Formatting<Ico n="chev" :s="8" :w="4" /></button>
                  <button><Ico n="ftab" :s="19" />Format as Table<Ico n="chev" :s="8" :w="4" /></button>
                  <button><Ico n="ftab" :s="19" />Cell Styles<Ico n="chev" :s="8" :w="4" /></button>
                  <span>Styles</span>
                </div>
                <button class="grp cel"><Ico n="cells" :s="36" :b="36" :w="1.6" />Cells<Ico n="chev" :s="8" :w="4" /></button>
                <button class="grp edi"><Ico n="mag" :s="36" :b="36" />Editing<Ico n="chev" :s="8" :w="4" /></button>
                <button class="more" aria-label="More commands"><Ico n="right" :s="9" :w="3" /></button>
                <button class="fold" aria-label="Collapse ribbon"><Ico n="chev" :s="13" :w="2.6" /></button>
              </div>
              <div class="warn">
                <Ico n="info" :s="20" :w="2" /><b>POSSIBLE DATA LOSS</b>
                <p>Some features might be lost if you save this workbook in the text (.txt) format. To preserve these features, save it in an Excel file format.</p>
                <button class="b1">Don't show again</button><button class="b2">Save As...</button>
                <button class="bx" aria-label="Dismiss"><Ico n="x" :s="13" :w="2.4" /></button>
              </div>
              <div class="fbar">
                <label class="nm"><input value="A1" aria-label="Name box" /><Ico n="chev" :s="13" :w="2.4" /></label>
                <Ico n="dots" :s="14" class="fd" />
                <div class="fx"><Ico n="x" :s="16" :w="1.6" class="g" /><Ico n="check" :s="19" :w="1.6" class="g" /><i>fx</i></div>
                <label class="fi"><input value="undefined" aria-label="Formula" /><Ico n="chev" :s="13" :w="2.4" /></label>
              </div>
              <div class="sheet">
                <div class="gridwrap">
                  <table>
                    <thead><tr><th class="rh"><i></i></th><th v-for="c in cols" :key="c" :class="{ on: c === 'A' }">{{ c }}</th></tr></thead>
                    <tbody>
                      <tr v-for="r in rows" :key="r">
                        <th class="rh" :class="{ on: r === 1 }">{{ r }}</th>
                        <td v-for="c in cols" :key="c" :class="{ sel: r === 1 && c === 'A' }"><span v-if="r === 1 && c === 'A'">undefined</span></td>
                      </tr>
                    </tbody>
                  </table>
                </div>
                <div class="svbar"><i class="arrow up"></i><i class="th"></i><i class="arrow dn"></i></div>
              </div>
              <div class="xtabs">
                <Ico n="left" :s="14" :w="2" class="g1" /><Ico n="right" :s="14" :w="2" class="g2" />
                <button class="st"><span>AGENT-WISE TOTAL PRIM</span></button>
                <Ico n="plus" :s="15" :w="2" class="sp" /><Ico n="dots" :s="15" class="sd" />
                <div class="shbar"><i class="arrow lt"></i><i class="th"></i><i class="arrow rt"></i></div>
              </div>
              <div class="status">
                <span>Ready</span><span class="ac"><Ico n="access" :s="18" :w="1.8" />Accessibility: Unavailable</span>
                <div class="zoomer">
                  <span class="vw on"><Ico n="table" :s="16" :w="2" /></span>
                  <span class="vw"><Ico n="page" :s="17" :w="2" /></span>
                  <span class="vw"><Ico n="brk" :s="17" :w="2" /></span>
                  <Ico n="minus" :s="11" :w="2.6" /><input v-model="zoom" type="range" min="0" max="100" aria-label="Zoom" /><Ico n="plus" :s="11" :w="2.6" />
                  <span class="pc">100%</span>
                </div>
              </div>
            </div>
            <Ico n="cursor" :s="22" class="cursor" />
            <div class="who">Shashank Kharkwal <Ico n="minus" :s="11" :w="2" class="dim" /><Ico n="plus" :s="13" :w="2" /></div>
          </section>

          <aside class="folk">
            <div v-for="p in people" :key="p.c" class="tile" :class="p.c">
              <b>{{ p.ini }}</b><span v-if="p.name">{{ p.name }}</span>
            </div>
          </aside>
        </div>
      </main>
    </div>
  </div>
</template>

<style>
html, body { margin: 0; overflow: hidden; }
</style>

<style scoped>
* { box-sizing: border-box; }
.screen { height: 100vh; display: flex; flex-direction: column; background: #f5f5f5; font: 14px "Noto Sans", "Open Sans", sans-serif; color: #242424; overflow: hidden; }
button { border: 0; background: none; padding: 0; font: inherit; color: inherit; display: flex; align-items: center; justify-content: center; flex: none; }
input, select { border: 0; background: none; padding: 0; font: inherit; color: inherit; outline: 0; min-width: 0; }
a { color: inherit; text-decoration: none; }
svg { flex: none; display: block; }
p, h1 { margin: 0; }
i { font-style: normal; }
.dim { opacity: .45; }

.strip { display: flex; height: 40px; padding: 6px 12px 6px 8px; background: #e5e5e5; align-items: center; }
.tabmenu { width: 24px; height: 28px; margin-right: 8px; }
.tab { flex: 0 1 156px; height: 28px; margin-right: 7px; padding: 0 9px 0 7px; border-radius: 9px; background: #cfcfcf; display: flex; align-items: center; min-width: 0; }
.tab.on { background: #ededed; }
.ttl { flex: 1; margin-left: 8px; white-space: nowrap; overflow: hidden; color: #1c1c1c; mask-image: linear-gradient(90deg, #000 75%, transparent); }
.tab button { margin-left: 9px; width: 12px; height: 12px; color: #111; }
.newtab { width: 28px; height: 28px; border-radius: 50%; background: #cfcfcf; }
.winbtns { margin-left: auto; display: flex; gap: 18px; color: #555; }

.urlrow { display: flex; align-items: center; height: 47px; padding: 0 6px 0 14px; background: #e5e5e5; border-bottom: 1px solid #c2c2c2; color: #555; }
.nav3 { display: flex; gap: 20px; width: 106px; }
.omni { flex: 1; height: 34px; border-radius: 17px; background: #c8c8c8; display: flex; align-items: center; gap: 13px; padding: 0 14px 0 5px; color: #5a5a5a; }
.micdot { width: 24px; height: 24px; border-radius: 50%; background: #0b57d0; color: #fff; display: flex; align-items: center; justify-content: center; }
.url { flex: 1; margin-left: -5px; color: #2a2a2a; }
.url i { color: #666; }
.exts { display: flex; align-items: center; width: 175px; padding-left: 19px; gap: 14px; }
.ext-c { background: #f6f6f6; color: #999; font-weight: 700; width: 16px; height: 18px; font-size: 14px; line-height: 18px; white-space: nowrap; }
.ext-new { width: 28px; height: 24px; display: flex; flex-direction: column; align-items: center; justify-content: flex-end; }
.ext-new i { width: 16px; height: 9px; border-radius: 9px 9px 0 0; background: #333; border: 3px solid #e8368f; border-right-color: #f5a623; border-bottom: 0; }
.ext-new b { width: 28px; height: 14px; border-radius: 3px; background: #e53935; color: #fff; font-size: 12px; line-height: 14px; text-align: center; }
.vsep { width: 1px; height: 16px; background: #bbb; }
.pill { height: 34px; border-radius: 17px; background: #c8c8c8; color: #222; }
.work { width: 84px; gap: 6px; margin-right: 6px; }
.work b { width: 20px; height: 20px; border-radius: 50%; background: #5f9e35; color: #fff; font-size: 12px; font-weight: 400; line-height: 20px; }
.upd { width: 196px; gap: 4px; }

.thead { height: 48px; flex: none; display: grid; grid-template-columns: 1fr minmax(300px, 762px) 1fr; align-items: center; background: #ebebeb; border-bottom: 1px solid #dadada; padding: 0 14px 0 25px; }
.tleft { display: flex; gap: 26px; align-items: center; }
.tsearch { height: 33px; margin: 0 7px 0 -7px; background: #fafafa; border: 1px solid #dcdcdc; border-radius: 4px; display: flex; align-items: center; padding-left: 27px; gap: 18px; color: #666; }
.tsearch input { flex: 1; appearance: none; }
.tsearch input::placeholder { color: #666; }
.tright { display: flex; align-items: center; justify-content: flex-end; gap: 11px; }
.premium { width: 175px; height: 31px; background: #fff; border: 1px solid #d1d1d1; border-radius: 4px; font-weight: 700; gap: 6px; font-size: 13px; }
.me { position: relative; width: 28px; height: 28px; border-radius: 50%; background: #fbe6d4; color: #8e562e; font-size: 11px; line-height: 28px; text-align: center; }
.me i { position: absolute; right: 0; bottom: 0; width: 10px; height: 10px; border-radius: 50%; background: #d13438; }

.body { flex: 1; display: flex; min-height: 0; }
.rail { width: 68px; flex: none; background: #ebebeb; border-right: 1px solid #dedede; padding-top: 7px; color: #5c5c5c; }
.rail a { position: relative; height: 56px; display: flex; flex-direction: column; align-items: center; font-size: 11px; line-height: 14px; padding-top: 2px; gap: 3px; }
.rail .slim { padding-top: 10px; }
.rail em { position: absolute; left: 36px; top: -3px; width: 16px; height: 16px; border-radius: 50%; background: #da3b01; color: #fff; font: 700 10px/16px "Noto Sans", sans-serif; text-align: center; }
.meeting { flex: 1; display: flex; flex-direction: column; min-width: 0; }
.mbar { height: 60px; flex: none; background: #fff; border-bottom: 1px solid #dedede; display: flex; align-items: center; padding: 0 17px 0 14px; }
.timer { margin-left: 14px; font-size: 13px; color: #333; }
.acts { margin-left: auto; display: flex; align-items: center; color: #333; }
.act { width: 56px; flex-direction: column; font-size: 11px; line-height: 14px; gap: 3px; white-space: nowrap; }
.act.wide { width: 72px; }
.act.dev { width: 54px; color: #242424; }
.ic { height: 24px; display: flex; align-items: center; gap: 2px; }
.ic b { font-size: 12px; margin-right: -9px; }
.asep { width: 1px; height: 33px; background: #d1d1d1; margin: 0 9px 0 8px; }
.caret { width: 18px; height: 24px; margin-right: 4px; padding-top: 8px; }
.caret.last { margin-right: 0; }
.stage { flex: 1; display: flex; min-height: 0; padding: 5px 5px 5px 17px; }

.shared { position: relative; flex: 1; min-width: 0; display: flex; flex-direction: column; background: #fff; }
.ctabs { height: 47px; flex: none; background: #dde3ea; display: flex; align-items: center; padding-left: 7px; color: #444; }
.cmenu { width: 33px; height: 33px; border-radius: 10px; background: #fff; margin-right: 8px; }
.ctab { width: 67px; height: 20px; flex: none; padding-left: 7px; display: flex; align-items: center; gap: 10px; border-right: 2px solid #c8cacd; }
.ctab span { width: 15px; overflow: hidden; font-size: 14px; mask-image: linear-gradient(90deg, #000 40%, transparent); }
.ctab:nth-last-child(4) { border-color: transparent; }
.ctab.cur { width: 59px; height: 40px; margin: 7px 0 0 -2px; padding: 0 0 6px 10px; background: #fff; border: 0; border-radius: 10px 10px 0 0; gap: 9px; }
.cplus { margin-left: 16px; }
.cwin { margin-left: auto; display: flex; gap: 40px; padding-right: 19px; color: #7b7f85; }
.cbar { height: 54px; flex: none; display: flex; align-items: center; color: #444; }
.cnav { width: 142px; display: flex; gap: 27px; padding-left: 19px; align-items: center; }
.comni { flex: 1; height: 40px; border-radius: 20px; background: #ebf1fa; display: flex; align-items: center; gap: 17px; padding: 0 19px 0 5px; min-width: 0; }
.site { width: 28px; height: 28px; border-radius: 50%; background: #fff; display: flex; align-items: center; justify-content: center; flex: none; }
.curl { flex: 1; margin-left: -7px; font-size: 15px; color: #4b4f54; white-space: nowrap; overflow: hidden; }
.curl b { font-weight: 400; color: #1f1f1f; }
.cright { width: 141px; display: flex; align-items: center; gap: 22px; padding-left: 21px; }
.blue { color: #1a5fd0; }
.cmarks { height: 41px; flex: none; display: flex; align-items: center; padding: 0 17px 8px 14px; color: #4a4d50; border-bottom: 1px solid #e3e3e3; font-size: 13px; }
.cmarks a { display: flex; gap: 10px; align-items: center; white-space: nowrap; }
.msep { width: 2px; height: 20px; background: #d3e2fb; margin: 0 15px 0 18px; }
.cmarks .allb { margin-left: auto; border-left: 2px solid #d3e2fb; padding-left: 18px; height: 18px; }

.cview { flex: 1; display: flex; min-height: 0; padding-top: 3px; }
.left { width: 752px; flex: none; display: flex; flex-direction: column; }
.site-row { flex: 1; display: flex; min-height: 0; }
.app { position: relative; flex: 1; min-width: 0; background: linear-gradient(90deg, #8fcbeb, #479ad1); padding: 12px 0 0 12px; overflow: hidden; font-family: Lato, sans-serif; color: #212529; }
.paper { background: #fff; margin-right: 12px; height: 700px; }
.yellow { height: 76px; background: #ffbe06; display: flex; align-items: flex-start; padding: 9px 0 0 26px; gap: 12px; }
.goback { width: 47px; height: 47px; border-radius: 50%; background: #fff; color: #4a9bd1; }
.pick { width: 412px; height: 52px; margin-top: 4px; border: 1px solid #6d9c8a; border-radius: 6px; background: #fff; display: flex; align-items: center; padding: 0 17px 2px 9px; color: #1b6180; }
.pick select { flex: 1; appearance: none; color: #4a9bd1; font: 600 19px "Noto Sans", sans-serif; }
h1 { font: 700 24px/28px "Liberation Sans", sans-serif; padding: 22px 0 0 35px; }
.card { position: absolute; left: 30px; right: -20px; top: 168px; height: 560px; background: #f1f1f1; border: 1px solid #4a9bd1; border-radius: 10px; padding: 23px 32px 0 18px; box-shadow: 0 0 14px rgba(0, 0, 0, .3); }
.filters { display: flex; justify-content: space-between; padding-left: 18px; }
.datewrap { padding-top: 18px; }
.date { position: relative; width: 341px; height: 54px; border: 1px solid #333845; border-bottom-width: 2px; border-radius: 6px; display: flex; align-items: center; padding: 4px 21px 0 10px; font-size: 14px; }
.date label { position: absolute; left: 6px; top: -3px; padding: 0 5px; background: #f1f1f1; font-size: 11px; line-height: 14px; }
.d1 { width: 72px; } .d2 { flex: 1; margin-left: 5px; }
.date svg { margin-top: -14px; color: #666; }
.datewrap p { font-size: 14px; line-height: 20px; padding: 3px 0 0 14px; }
.tsearch2 { width: 266px; height: 57px; border: 1px solid #4a9bd1; border-radius: 6px; background: #fff; display: flex; align-items: center; padding: 0 15px 0 12px; font-size: 16px; }
.tsearch2 input { flex: 1; } .tsearch2 input::placeholder { color: #4a9bd1; }
.tsearch2 svg { margin-top: -11px; color: #111; }
.rep { width: 672px; border-collapse: separate; border-spacing: 0 9px; margin-top: 36px; font-size: 17px; line-height: 28px; table-layout: fixed; }
.rep th { text-align: left; height: 64px; font-size: 16px; padding: 0 0 4px; color: #14162a; }
.rep td { height: 61px; background: #fff; border: solid #5ea6d2; border-width: 1px 0; padding: 0; }
.rep .c1 { width: 99px; padding-left: 28px; }
.rep td.c1 { border-left-width: 1px; padding-left: 28px; }
.rep td.c2 { padding-right: 36px; }
.rep .c3 { width: 80px; }
.rep td.c3 { border-right-width: 1px; }
.rep td button { width: 46px; height: 46px; border-radius: 50%; background: #efefef; }
.app footer { position: absolute; left: 0; right: 0; bottom: 0; height: 47px; background: #00308c; color: #fff; display: flex; align-items: center; justify-content: space-between; padding: 0 10px; font-size: 17px; }
.vbar { width: 18px; background: #fafafa; display: flex; flex-direction: column; align-items: center; padding: 4px 0 4px; border-right: 1px solid #dfe6f3; }
.arrow { flex: none; width: 0; height: 0; border: 5px solid transparent; }
.arrow.up { border-bottom: 9px solid #8a8a8a; border-top: 0; }
.arrow.dn { border-top: 9px solid #8a8a8a; border-bottom: 0; margin-top: auto; }
.arrow.lt { border-right: 8px solid #8a8a8a; border-left: 0; }
.arrow.rt { border-left: 8px solid #8a8a8a; border-right: 0; margin-left: auto; }
.vbar .th { width: 9px; height: 381px; border-radius: 5px; background: #858585; margin-top: 136px; }
.hbar { height: 18px; flex: none; display: flex; align-items: center; padding: 0 22px 0 5px; background: #fcfcfc; }
.hbar .th { width: 670px; height: 11px; border-radius: 6px; background: #8a8a8a; margin-left: 8px; }
.devtools { flex: 1; font-size: 12px; color: #444; }
.row { display: flex; align-items: center; justify-content: flex-end; border-bottom: 1px solid #dde6f6; gap: 18px; }
.r1 { height: 27px; background: #ebf1fb; padding-right: 14px; margin-top: -2px; }
.r2 { height: 28px; padding-right: 12px; }
.r3 { height: 54px; padding: 0 13px 22px 0; gap: 7px; }
.r4 { height: 52px; } .r5 { height: 28px; background: #f3f7fe; } .r6 { height: 134px; }

.dock { position: relative; height: 56px; flex: none; border-top: 2px solid #9aa3a6; background: linear-gradient(180deg, #b9cdd1, #c3e2e8 70%); display: flex; align-items: center; color: #222; padding-bottom: 3px; }
.weather { width: 24px; height: 24px; margin-left: 27px; border-radius: 50%; background: #f39a1e; position: relative; }
.dock em { position: absolute; width: 18px; height: 18px; border-radius: 50%; background: #c4331d; color: #fff; font: 12px/18px "Noto Sans", sans-serif; text-align: center; }
.weather em { left: 10px; top: -8px; }
.apps { display: flex; margin-left: 320px; }
.dk { position: relative; width: 52px; height: 52px; display: flex; align-items: center; justify-content: center; }
.dk em { right: 5px; top: 4px; }
.dk i { position: absolute; bottom: 3px; left: 22px; width: 8px; height: 4px; border-radius: 2px; background: #777d80; }
.alert { background: #eca193; border-radius: 5px; width: 46px; margin: 2px 3px; height: 48px; }
.alert i { left: 11px; width: 25px; bottom: 0; background: #c4331d; }
.dk .mail { background: #114f96; right: 0; top: 3px; display: flex; align-items: center; justify-content: center; }
.focus { background: #dde9ec; border-radius: 5px; width: 44px; margin: 2px 4px; height: 48px; }
.focus i { left: 12px; width: 20px; bottom: 0; background: #1f7391; }
.tray { margin-left: auto; display: flex; align-items: center; gap: 10px; padding-right: 23px; font-size: 14px; line-height: 19px; }
.t2 { margin-left: 10px; }
.tmic { width: 38px; height: 47px; border-radius: 5px; background: #17596e; color: #fff; display: flex; align-items: center; justify-content: center; }
.lang { text-align: center; width: 32px; margin-right: 7px; }
.clock { text-align: right; width: 81px; white-space: nowrap; }
.who { position: absolute; left: -4px; bottom: 8px; height: 25px; width: 165px; border-radius: 4px; background: rgba(72, 76, 78, .82); color: #fff; font-size: 12px; display: flex; align-items: center; gap: 7px; padding-left: 5px; white-space: nowrap; }
.cursor { position: absolute; left: 1281px; top: 182px; }

.excel { position: absolute; left: 747px; top: 142px; width: 711px; border: 2px solid #1c7a4c; border-radius: 10px; background: #f0eeee; box-shadow: 0 10px 34px rgba(0, 0, 0, .4); overflow: hidden; color: #303030; padding: 0 8px; }
.xtitle { height: 56px; display: flex; align-items: center; padding-left: 9px; font-size: 13px; }
.auto { display: flex; align-items: center; margin-left: 18px; gap: 6px; width: 112px; }
.auto input { position: absolute; opacity: 0; }
.sw { width: 52px; height: 24px; border: 1px solid #666; border-radius: 12px; background: #fff; display: flex; align-items: center; padding-left: 3px; gap: 6px; color: #555; }
.sw i { width: 17px; height: 17px; border-radius: 50%; background: #5c5c5c; }
.xs { margin-left: 14px; } .xu { margin-left: 15px; } .xc { margin-left: 6px; } .xd { margin-left: 15px; }
.fname { margin-left: 28px; width: 49px; } .saved { width: 70px; }
.saved, .fname { white-space: nowrap; }
.xv { margin-left: 2px; }
.xright { margin-left: auto; display: flex; align-items: center; gap: 41px; padding-right: 12px; }
.xq { margin-right: 7px; }
.xmenu { height: 36px; display: flex; align-items: center; font-size: 14px; }
.xmenu > button { height: 30px; margin-top: 6px; white-space: nowrap; }
.xmenu span { padding-bottom: 2px; border-bottom: 3px solid transparent; line-height: 22px; }
.xmenu .on { font-weight: 600; } .xmenu .on span { border-color: #137345; }
.xm2 { display: flex; gap: 9px; margin-left: auto; padding-right: 6px; margin-top: -3px; }
.cm { width: 29px; height: 29px; background: #fff; border: 1px solid #aaa; border-radius: 5px; }
.sh { width: 37px; height: 29px; background: #0e7240; color: #fff; border-radius: 5px; gap: 4px; }
.ribbon { height: 118px; background: #fff; border-radius: 8px 8px 0 0; display: flex; align-items: flex-start; padding: 5px 0 0 2px; overflow: hidden; border-bottom: 2px solid #e2e0e0; }
.grp { height: 105px; flex-direction: column; justify-content: flex-start; border-right: 1px solid #cfcfcf; padding-top: 1px; line-height: 20px; gap: 2px; font-size: 13px; }
.styles { position: relative; width: 216px; height: 105px; border-right: 1px solid #cfcfcf; padding-left: 14px; display: flex; flex-direction: column; font-size: 13px; }
.styles button { justify-content: flex-start; gap: 4px; height: 30px; white-space: nowrap; }
.styles span { text-align: center; font-size: 12px; line-height: 20px; margin-left: -14px; }
.cel { width: 64px; } .edi { width: 40px; overflow: hidden; align-items: flex-start; border: 0; padding-left: 10px; }
.edi svg:last-child { margin-left: 16px; }
.more { width: 29px; height: 116px; margin-top: -5px; border: 1px solid #8f8f8f; }
.fold { margin: 90px 0 0 8px; }
.warn { height: 76px; background: #fff6d2; border-radius: 0 0 8px 8px; display: flex; align-items: center; padding-left: 13px; box-shadow: 0 2px 3px rgba(0, 0, 0, .15); color: #2b2b2b; }
.warn b { font-weight: 600; margin-left: 9px; width: 151px; white-space: nowrap; font-size: 14px; }
.warn p { width: 226px; line-height: 19px; font-size: 13px; text-decoration: underline; text-underline-offset: 3px; }
.warn button { height: 32px; font-size: 13px; background: #fff; border: 1px solid #9a9a9a; border-radius: 5px; white-space: nowrap; }
.warn .b1 { width: 132px; margin: 0 11px 0 8px; } .warn .b2 { width: 81px; }
.warn .bx { border: 0; background: none; margin-left: 14px; }
.fbar { display: flex; align-items: center; height: 45px; font-size: 15px; }
.nm, .fx, .fi { height: 27px; background: #fff; border-radius: 5px; display: flex; align-items: center; border: 1px solid #e2e0e0; }
.nm { width: 119px; padding: 0 5px; } .nm input { flex: 1; } .fd { margin: 0 5px; }
.fx { width: 86px; padding-left: 6px; gap: 10px; margin-right: 5px; } .fx i { font: italic 21px "Liberation Serif", serif; } .g { color: #aaa; }
.fi { flex: 1; padding: 0 4px 0 12px; } .fi input { flex: 1; }
.sheet { display: flex; margin: 0 -8px; height: 165px; }
.gridwrap { flex: 1; overflow: hidden; }
.sheet table { border-collapse: collapse; table-layout: fixed; width: 709px; font-size: 15px; line-height: 18px; }
.sheet th { font-weight: 400; height: 22px; padding: 0; width: 75px; color: #4c4c4c; border-bottom: 1px solid #a8a8a8; font-size: 14px; background: #ededed; }
.sheet .rh { width: 30px; border-right: 1px solid #bbb; border-bottom-color: #e0e0e0; }
.sheet thead .rh { border-right: 0; border-bottom-color: #a8a8a8; }
.rh i { display: block; margin: 0 2px 0 auto; width: 0; border: 8px solid transparent; border-right-color: #d0d0d0; border-bottom-color: #d0d0d0; }
.sheet th.on { background: #dcdcdc; color: #1c7a4c; }
.sheet td { height: 23px; padding: 0; border: 1px solid #e1e1e1; background: #fff; }
.sheet td.sel { outline: 2px solid #1c7a4c; outline-offset: -1px; padding-left: 3px; font-size: 15px; color: #111; }
.sheet tbody th { height: 23px; }
.svbar { width: 24px; display: flex; flex-direction: column; align-items: center; padding: 7px 0 3px; background: #f3f3f3; }
.svbar .th { width: 9px; height: 38px; border-radius: 5px; background: #6d6d6d; margin-top: 5px; }
.xtabs { height: 37px; display: flex; align-items: center; margin: 0 -8px; padding: 0 23px 0 23px; color: #555; background: #ececea; }
.g1, .g2 { color: #999; } .g2 { margin-left: 24px; }
.st { width: 205px; height: 33px; margin: 0 0 4px 54px; padding-left: 10px; background: #fff; border-radius: 0 0 0 6px; justify-content: flex-start; overflow: hidden; color: #222; }
.st span { width: 195px; white-space: nowrap; font-weight: 600; border-bottom: 3px solid #1c7a4c; line-height: 22px; font-size: 16px; text-align: left; }
.sp { margin-left: 49px; } .sd { margin-left: 23px; }
.shbar { margin-left: auto; width: 238px; height: 19px; border-radius: 9px; background: #f8f8f8; display: flex; align-items: center; padding: 0 5px 0 7px; }
.shbar .th { width: 172px; height: 9px; border-radius: 5px; background: #6d6d6d; margin-left: 7px; }
.status { height: 27px; display: flex; align-items: center; margin: 0 -8px; padding: 0 23px 0 11px; font-size: 12px; background: #f4f4f4; color: #444; }
.ac { display: flex; align-items: center; gap: 3px; margin-left: 22px; }
.zoomer { display: flex; align-items: center; margin-left: auto; }
.vw { width: 47px; height: 27px; display: flex; align-items: center; justify-content: center; } .vw.on { background: #dedede; }
.zoomer > svg { margin-left: 4px; }
.zoomer input { appearance: none; width: 116px; height: 2px; background: #666; margin: 0 2px 0 7px; }
.zoomer input::-webkit-slider-thumb { appearance: none; width: 6px; height: 14px; background: #444; }
.pc { margin-left: 14px; }

.folk { width: 252px; flex: none; display: flex; flex-direction: column; justify-content: center; gap: 4px; padding: 0 0 1px 16px; }
.tile { position: relative; height: 131px; border: 1px solid #d4d4d4; border-radius: 5px; display: flex; align-items: center; justify-content: center; }
.tile b { width: 65px; height: 65px; border-radius: 50%; font-size: 23px; font-weight: 600; line-height: 65px; text-align: center; box-shadow: 0 1px 3px rgba(0, 0, 0, .2); }
.tile span { position: absolute; left: 7px; bottom: 7px; height: 24px; line-height: 23px; padding: 0 5px; border-radius: 4px; background: #757271; color: #fff; font-size: 12px; }
.p1 { background: linear-gradient(150deg, #e8eff2, #e9e9ee 45%, #f3eeee 80%, #f4f2ea); } .p1 b { background: #ebd3e1; color: #5a1743; }
.p2 { border: 3px solid #5b5fc7; background: radial-gradient(circle at 95% 15%, #e6f2ef, transparent 60%), radial-gradient(circle at 5% 0, #f4e8ec, transparent 45%), radial-gradient(circle at 5% 75%, #f8ecdc, transparent 45%), #f0f0e3; } .p2 b { background: #daeff2; color: #32696b; }
.p2 span { left: 5px; bottom: 5px; }
.p3 { background: radial-gradient(circle at 70% 55%, #f3dbe9, #f4e7ec 60%, #f4f0ec); } .p3 b { background: #fdeecb; color: #835f0b; }
.p4 { background: linear-gradient(200deg, #e4f0f1, #ebecf1 40%, #f2eff3 75%, #f4f4f4); } .p4 b { background: #fce9d6; color: #8e562e; box-shadow: none; }
</style>
